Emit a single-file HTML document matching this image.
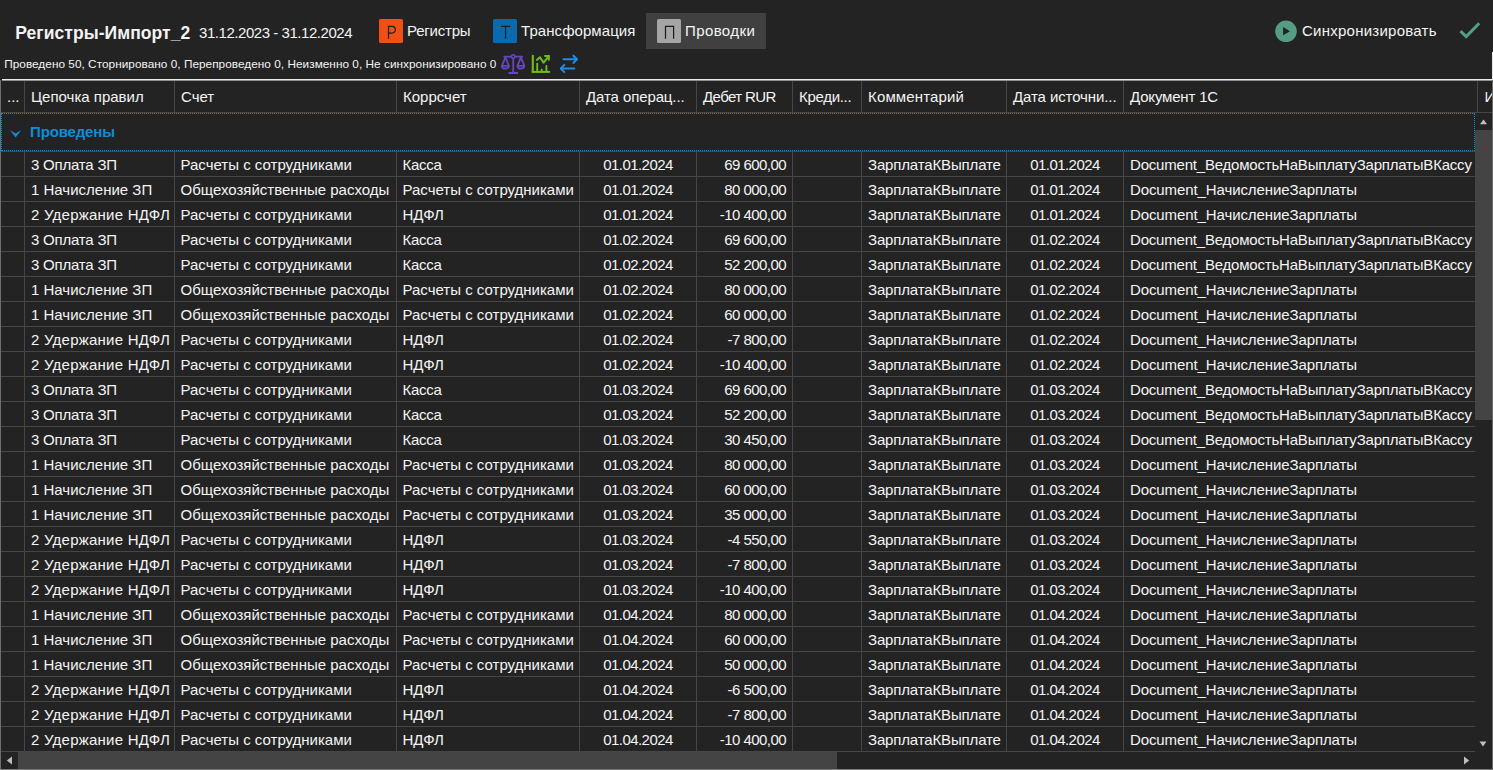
<!DOCTYPE html><html><head><meta charset="utf-8"><style>
*{margin:0;padding:0;box-sizing:border-box}
html,body{width:1493px;height:770px;overflow:hidden;background:#232323}
body{position:relative;font-family:"Liberation Sans",sans-serif;color:#F4F4F4;font-size:15px}
.a{position:absolute;white-space:nowrap}
.vl{position:absolute;width:1px;background:#464646}
.hl{position:absolute;height:1px;background:#464646}
.t{position:absolute;white-space:nowrap;line-height:18px;height:18px}
.num{letter-spacing:-0.55px}
.hd{letter-spacing:0}
</style></head><body>
<div class="a" style="left:15.3px;top:23px;font-size:17.5px;letter-spacing:0.05px;font-weight:bold;line-height:20px">Регистры-Импорт_2</div>
<div class="a" style="left:199px;top:24px;font-size:15px;line-height:18px;letter-spacing:-0.45px">31.12.2023 - 31.12.2024</div>
<div class="a" style="left:646px;top:13px;width:120px;height:36px;background:#404040"></div>
<svg class="a" style="left:379px;top:19px" width="24" height="24" viewBox="0 0 24 24"><rect x="0" y="0" width="24" height="24" rx="1.6" fill="#F24F17"/><path d="M9.5 19.8 V7.45 H13 A3.35 3.35 0 0 1 13 14.15 H9.5" fill="none" stroke="#1C1C1C" stroke-width="1.2"/></svg>
<div class="a" style="left:407px;top:22px;line-height:18px;letter-spacing:-0.2px">Регистры</div>
<svg class="a" style="left:493px;top:19px" width="24" height="24" viewBox="0 0 24 24"><rect x="0" y="0" width="24" height="24" rx="1.6" fill="#0A6AB0"/><path d="M8 7.45 H17.1 M12.55 7.45 V19.8" fill="none" stroke="#1C1C1C" stroke-width="1.2"/></svg>
<div class="a" style="left:521px;top:22px;line-height:18px;letter-spacing:0.07px">Трансформация</div>
<svg class="a" style="left:657px;top:19px" width="24" height="24" viewBox="0 0 24 24"><rect x="0" y="0" width="24" height="24" rx="1.6" fill="#A5A5A5"/><path d="M8.5 19.8 V7.45 H16.6 V19.8" fill="none" stroke="#1C1C1C" stroke-width="1.2"/></svg>
<div class="a" style="left:685px;top:22px;line-height:18px;letter-spacing:0.4px">Проводки</div>
<svg class="a" style="left:1274px;top:20px" width="24" height="23" viewBox="0 0 24 23"><circle cx="12" cy="11.3" r="10.8" fill="#559C84"/><path d="M9.1 6.9 L16 11.2 L9.1 15.3 Z" fill="#232323"/></svg>
<div class="a" style="left:1302px;top:22px;line-height:18px;letter-spacing:0.25px">Синхронизировать</div>
<svg class="a" style="left:1456px;top:19px" width="28" height="22" viewBox="0 0 28 22"><path d="M4.5 12.2 L10.2 17.6 L23.2 4.2" fill="none" stroke="#4FA086" stroke-width="3"/></svg>
<div class="a" style="left:4.2px;top:57px;font-size:11.8px;line-height:14px;letter-spacing:0.03px">Проведено 50, Сторнировано 0, Перепроведено 0, Неизменно 0, Не синхронизировано 0</div>
<svg class="a" style="left:499px;top:52px" width="28" height="24" viewBox="0 0 28 24"><g fill="none" stroke="#6744C0" stroke-width="1.8" stroke-linecap="round" stroke-linejoin="round"><path d="M5.3 4.7 H23.1"/><path d="M14.2 6 V20.5"/><path d="M9.4 21 H19" stroke-width="2" stroke-linecap="butt"/><path d="M6.4 5.3 L2.9 13.9 M6.4 5.3 L9.9 13.9 M2.9 13.9 H9.9 M2.9 13.9 A3.5 2.7 0 0 0 9.9 13.9"/><path d="M21.9 5.3 L18.4 13.9 M21.9 5.3 L25.4 13.9 M18.4 13.9 H25.4 M18.4 13.9 A3.5 2.7 0 0 0 25.4 13.9"/></g><circle cx="14.2" cy="4.5" r="1.7" fill="#232323" stroke="#6744C0" stroke-width="1.6"/></svg>
<svg class="a" style="left:528px;top:52px" width="28" height="24" viewBox="0 0 28 24"><g fill="none" stroke="#6DBD1C" stroke-width="2"><path d="M4.8 3.7 V19.9" stroke-width="2.1" stroke-linecap="round"/><path d="M3.75 19.9 H22.1"/><path d="M9.2 11.8 V19.9 M13.7 17.4 V19.9 M18.4 13.9 V19.9" stroke-width="1.9" stroke-linecap="round"/><path d="M8.9 7.9 L11.9 5.2 L15.6 10.6 L20.6 4.4" stroke-linejoin="round" stroke-linecap="round"/><path d="M17 4 H20.8 V7.8" stroke-linecap="round"/></g></svg>
<svg class="a" style="left:555px;top:52px" width="28" height="24" viewBox="0 0 28 24"><g fill="none" stroke="#218AE3" stroke-width="2.1" stroke-linecap="round" stroke-linejoin="round"><path d="M8.5 7.3 H21.7"/><path d="M18.5 3.7 L21.9 7.3 L18.5 10.9"/><path d="M19.3 16.5 H6.1"/><path d="M9.3 12.9 L6 16.5 L9.3 20.1"/></g></svg>
<div class="a" style="left:1492px;top:52px;width:1px;height:28px;background:#E6E6E6"></div>
<div class="a" style="left:2px;top:79px;width:1491px;height:1px;background:#EAEAEA"></div><div class="a" style="left:2px;top:80px;width:1491px;height:1px;background:#909090"></div>
<div class="a" style="left:0;top:80px;width:1px;height:690px;background:#6E6E6E"></div>
<div class="a" style="left:1492px;top:80px;width:1px;height:690px;background:#6A6A6A"></div>
<div class="a" style="left:0;top:769px;width:1493px;height:1px;background:#7A7A7A"></div>
<div class="t" style="left:7px;top:88px;letter-spacing:0px">...</div>
<div class="t" style="left:31px;top:88px;letter-spacing:0px">Цепочка правил</div>
<div class="t" style="left:181px;top:88px;letter-spacing:0px">Счет</div>
<div class="t" style="left:403px;top:88px;letter-spacing:0px">Коррсчет</div>
<div class="t" style="left:586px;top:88px;letter-spacing:-0.1px">Дата операц...</div>
<div class="t" style="left:703px;top:88px;letter-spacing:-0.6px">Дебет RUR</div>
<div class="t" style="left:799px;top:88px;letter-spacing:-0.3px">Креди...</div>
<div class="t" style="left:868px;top:88px;letter-spacing:0.15px">Комментарий</div>
<div class="t" style="left:1013px;top:88px;letter-spacing:-0.1px">Дата источни...</div>
<div class="t" style="left:1130px;top:88px;letter-spacing:-0.17px">Документ 1С</div>
<div class="a" style="left:1478px;top:82px;width:14px;height:30px;overflow:hidden"><div class="t" style="left:6.5px;top:6px">И</div></div>
<div class="vl" style="left:24px;top:81px;height:31px"></div>
<div class="vl" style="left:174px;top:81px;height:31px"></div>
<div class="vl" style="left:396px;top:81px;height:31px"></div>
<div class="vl" style="left:579px;top:81px;height:31px"></div>
<div class="vl" style="left:696px;top:81px;height:31px"></div>
<div class="vl" style="left:792px;top:81px;height:31px"></div>
<div class="vl" style="left:861px;top:81px;height:31px"></div>
<div class="vl" style="left:1006px;top:81px;height:31px"></div>
<div class="vl" style="left:1123px;top:81px;height:31px"></div>
<div class="vl" style="left:1477px;top:81px;height:31px"></div>
<div class="hl" style="left:1px;top:112px;width:1491px"></div>
<div class="a" style="left:1px;top:113px;width:1474px;height:38px;border:1px dotted #0A8ED8"></div>
<svg class="a" style="left:9px;top:129px" width="14" height="10" viewBox="0 0 14 10"><path d="M1 1 L6.6 4.4 L12.3 1 L6.6 8.4 Z" fill="#0A8ED8"/></svg>
<div class="a" style="left:30px;top:123px;font-weight:bold;color:#0A8ED8;line-height:18px;letter-spacing:-0.15px">Проведены</div>
<div class="hl" style="left:1px;top:151px;width:1474px"></div>
<div class="t" style="left:31px;top:156px;letter-spacing:-0.2px">3 Оплата ЗП</div>
<div class="t" style="left:180.5px;top:156px;letter-spacing:0px">Расчеты с сотрудниками</div>
<div class="t" style="left:402.5px;top:156px;letter-spacing:-0.3px">Касса</div>
<div class="t num" style="left:580px;width:116px;text-align:center;top:156px">01.01.2024</div>
<div class="t num" style="left:697px;width:89px;text-align:right;top:156px">69 600,00</div>
<div class="t" style="left:868px;top:156px;letter-spacing:-0.15px">ЗарплатаКВыплате</div>
<div class="t num" style="left:1007px;width:116px;text-align:center;top:156px">01.01.2024</div>
<div class="t" style="left:1130px;top:156px;letter-spacing:-0.2px">Document_ВедомостьНаВыплатуЗарплатыВКассу</div>
<div class="hl" style="left:1px;top:176px;width:1474px"></div>
<div class="t" style="left:31px;top:181px;letter-spacing:0px">1 Начисление ЗП</div>
<div class="t" style="left:180.5px;top:181px;letter-spacing:0px">Общехозяйственные расходы</div>
<div class="t" style="left:402.5px;top:181px;letter-spacing:0px">Расчеты с сотрудниками</div>
<div class="t num" style="left:580px;width:116px;text-align:center;top:181px">01.01.2024</div>
<div class="t num" style="left:697px;width:89px;text-align:right;top:181px">80 000,00</div>
<div class="t" style="left:868px;top:181px;letter-spacing:-0.15px">ЗарплатаКВыплате</div>
<div class="t num" style="left:1007px;width:116px;text-align:center;top:181px">01.01.2024</div>
<div class="t" style="left:1130px;top:181px;letter-spacing:-0.1px">Document_НачислениеЗарплаты</div>
<div class="hl" style="left:1px;top:201px;width:1474px"></div>
<div class="t" style="left:31px;top:206px;letter-spacing:0.24px">2 Удержание НДФЛ</div>
<div class="t" style="left:180.5px;top:206px;letter-spacing:0px">Расчеты с сотрудниками</div>
<div class="t" style="left:402.5px;top:206px;letter-spacing:0px">НДФЛ</div>
<div class="t num" style="left:580px;width:116px;text-align:center;top:206px">01.01.2024</div>
<div class="t num" style="left:697px;width:89px;text-align:right;top:206px">-10 400,00</div>
<div class="t" style="left:868px;top:206px;letter-spacing:-0.15px">ЗарплатаКВыплате</div>
<div class="t num" style="left:1007px;width:116px;text-align:center;top:206px">01.01.2024</div>
<div class="t" style="left:1130px;top:206px;letter-spacing:-0.1px">Document_НачислениеЗарплаты</div>
<div class="hl" style="left:1px;top:226px;width:1474px"></div>
<div class="t" style="left:31px;top:231px;letter-spacing:-0.2px">3 Оплата ЗП</div>
<div class="t" style="left:180.5px;top:231px;letter-spacing:0px">Расчеты с сотрудниками</div>
<div class="t" style="left:402.5px;top:231px;letter-spacing:-0.3px">Касса</div>
<div class="t num" style="left:580px;width:116px;text-align:center;top:231px">01.02.2024</div>
<div class="t num" style="left:697px;width:89px;text-align:right;top:231px">69 600,00</div>
<div class="t" style="left:868px;top:231px;letter-spacing:-0.15px">ЗарплатаКВыплате</div>
<div class="t num" style="left:1007px;width:116px;text-align:center;top:231px">01.02.2024</div>
<div class="t" style="left:1130px;top:231px;letter-spacing:-0.2px">Document_ВедомостьНаВыплатуЗарплатыВКассу</div>
<div class="hl" style="left:1px;top:251px;width:1474px"></div>
<div class="t" style="left:31px;top:256px;letter-spacing:-0.2px">3 Оплата ЗП</div>
<div class="t" style="left:180.5px;top:256px;letter-spacing:0px">Расчеты с сотрудниками</div>
<div class="t" style="left:402.5px;top:256px;letter-spacing:-0.3px">Касса</div>
<div class="t num" style="left:580px;width:116px;text-align:center;top:256px">01.02.2024</div>
<div class="t num" style="left:697px;width:89px;text-align:right;top:256px">52 200,00</div>
<div class="t" style="left:868px;top:256px;letter-spacing:-0.15px">ЗарплатаКВыплате</div>
<div class="t num" style="left:1007px;width:116px;text-align:center;top:256px">01.02.2024</div>
<div class="t" style="left:1130px;top:256px;letter-spacing:-0.2px">Document_ВедомостьНаВыплатуЗарплатыВКассу</div>
<div class="hl" style="left:1px;top:276px;width:1474px"></div>
<div class="t" style="left:31px;top:281px;letter-spacing:0px">1 Начисление ЗП</div>
<div class="t" style="left:180.5px;top:281px;letter-spacing:0px">Общехозяйственные расходы</div>
<div class="t" style="left:402.5px;top:281px;letter-spacing:0px">Расчеты с сотрудниками</div>
<div class="t num" style="left:580px;width:116px;text-align:center;top:281px">01.02.2024</div>
<div class="t num" style="left:697px;width:89px;text-align:right;top:281px">80 000,00</div>
<div class="t" style="left:868px;top:281px;letter-spacing:-0.15px">ЗарплатаКВыплате</div>
<div class="t num" style="left:1007px;width:116px;text-align:center;top:281px">01.02.2024</div>
<div class="t" style="left:1130px;top:281px;letter-spacing:-0.1px">Document_НачислениеЗарплаты</div>
<div class="hl" style="left:1px;top:301px;width:1474px"></div>
<div class="t" style="left:31px;top:306px;letter-spacing:0px">1 Начисление ЗП</div>
<div class="t" style="left:180.5px;top:306px;letter-spacing:0px">Общехозяйственные расходы</div>
<div class="t" style="left:402.5px;top:306px;letter-spacing:0px">Расчеты с сотрудниками</div>
<div class="t num" style="left:580px;width:116px;text-align:center;top:306px">01.02.2024</div>
<div class="t num" style="left:697px;width:89px;text-align:right;top:306px">60 000,00</div>
<div class="t" style="left:868px;top:306px;letter-spacing:-0.15px">ЗарплатаКВыплате</div>
<div class="t num" style="left:1007px;width:116px;text-align:center;top:306px">01.02.2024</div>
<div class="t" style="left:1130px;top:306px;letter-spacing:-0.1px">Document_НачислениеЗарплаты</div>
<div class="hl" style="left:1px;top:326px;width:1474px"></div>
<div class="t" style="left:31px;top:331px;letter-spacing:0.24px">2 Удержание НДФЛ</div>
<div class="t" style="left:180.5px;top:331px;letter-spacing:0px">Расчеты с сотрудниками</div>
<div class="t" style="left:402.5px;top:331px;letter-spacing:0px">НДФЛ</div>
<div class="t num" style="left:580px;width:116px;text-align:center;top:331px">01.02.2024</div>
<div class="t num" style="left:697px;width:89px;text-align:right;top:331px">-7 800,00</div>
<div class="t" style="left:868px;top:331px;letter-spacing:-0.15px">ЗарплатаКВыплате</div>
<div class="t num" style="left:1007px;width:116px;text-align:center;top:331px">01.02.2024</div>
<div class="t" style="left:1130px;top:331px;letter-spacing:-0.1px">Document_НачислениеЗарплаты</div>
<div class="hl" style="left:1px;top:351px;width:1474px"></div>
<div class="t" style="left:31px;top:356px;letter-spacing:0.24px">2 Удержание НДФЛ</div>
<div class="t" style="left:180.5px;top:356px;letter-spacing:0px">Расчеты с сотрудниками</div>
<div class="t" style="left:402.5px;top:356px;letter-spacing:0px">НДФЛ</div>
<div class="t num" style="left:580px;width:116px;text-align:center;top:356px">01.02.2024</div>
<div class="t num" style="left:697px;width:89px;text-align:right;top:356px">-10 400,00</div>
<div class="t" style="left:868px;top:356px;letter-spacing:-0.15px">ЗарплатаКВыплате</div>
<div class="t num" style="left:1007px;width:116px;text-align:center;top:356px">01.02.2024</div>
<div class="t" style="left:1130px;top:356px;letter-spacing:-0.1px">Document_НачислениеЗарплаты</div>
<div class="hl" style="left:1px;top:376px;width:1474px"></div>
<div class="t" style="left:31px;top:381px;letter-spacing:-0.2px">3 Оплата ЗП</div>
<div class="t" style="left:180.5px;top:381px;letter-spacing:0px">Расчеты с сотрудниками</div>
<div class="t" style="left:402.5px;top:381px;letter-spacing:-0.3px">Касса</div>
<div class="t num" style="left:580px;width:116px;text-align:center;top:381px">01.03.2024</div>
<div class="t num" style="left:697px;width:89px;text-align:right;top:381px">69 600,00</div>
<div class="t" style="left:868px;top:381px;letter-spacing:-0.15px">ЗарплатаКВыплате</div>
<div class="t num" style="left:1007px;width:116px;text-align:center;top:381px">01.03.2024</div>
<div class="t" style="left:1130px;top:381px;letter-spacing:-0.2px">Document_ВедомостьНаВыплатуЗарплатыВКассу</div>
<div class="hl" style="left:1px;top:401px;width:1474px"></div>
<div class="t" style="left:31px;top:406px;letter-spacing:-0.2px">3 Оплата ЗП</div>
<div class="t" style="left:180.5px;top:406px;letter-spacing:0px">Расчеты с сотрудниками</div>
<div class="t" style="left:402.5px;top:406px;letter-spacing:-0.3px">Касса</div>
<div class="t num" style="left:580px;width:116px;text-align:center;top:406px">01.03.2024</div>
<div class="t num" style="left:697px;width:89px;text-align:right;top:406px">52 200,00</div>
<div class="t" style="left:868px;top:406px;letter-spacing:-0.15px">ЗарплатаКВыплате</div>
<div class="t num" style="left:1007px;width:116px;text-align:center;top:406px">01.03.2024</div>
<div class="t" style="left:1130px;top:406px;letter-spacing:-0.2px">Document_ВедомостьНаВыплатуЗарплатыВКассу</div>
<div class="hl" style="left:1px;top:426px;width:1474px"></div>
<div class="t" style="left:31px;top:431px;letter-spacing:-0.2px">3 Оплата ЗП</div>
<div class="t" style="left:180.5px;top:431px;letter-spacing:0px">Расчеты с сотрудниками</div>
<div class="t" style="left:402.5px;top:431px;letter-spacing:-0.3px">Касса</div>
<div class="t num" style="left:580px;width:116px;text-align:center;top:431px">01.03.2024</div>
<div class="t num" style="left:697px;width:89px;text-align:right;top:431px">30 450,00</div>
<div class="t" style="left:868px;top:431px;letter-spacing:-0.15px">ЗарплатаКВыплате</div>
<div class="t num" style="left:1007px;width:116px;text-align:center;top:431px">01.03.2024</div>
<div class="t" style="left:1130px;top:431px;letter-spacing:-0.2px">Document_ВедомостьНаВыплатуЗарплатыВКассу</div>
<div class="hl" style="left:1px;top:451px;width:1474px"></div>
<div class="t" style="left:31px;top:456px;letter-spacing:0px">1 Начисление ЗП</div>
<div class="t" style="left:180.5px;top:456px;letter-spacing:0px">Общехозяйственные расходы</div>
<div class="t" style="left:402.5px;top:456px;letter-spacing:0px">Расчеты с сотрудниками</div>
<div class="t num" style="left:580px;width:116px;text-align:center;top:456px">01.03.2024</div>
<div class="t num" style="left:697px;width:89px;text-align:right;top:456px">80 000,00</div>
<div class="t" style="left:868px;top:456px;letter-spacing:-0.15px">ЗарплатаКВыплате</div>
<div class="t num" style="left:1007px;width:116px;text-align:center;top:456px">01.03.2024</div>
<div class="t" style="left:1130px;top:456px;letter-spacing:-0.1px">Document_НачислениеЗарплаты</div>
<div class="hl" style="left:1px;top:476px;width:1474px"></div>
<div class="t" style="left:31px;top:481px;letter-spacing:0px">1 Начисление ЗП</div>
<div class="t" style="left:180.5px;top:481px;letter-spacing:0px">Общехозяйственные расходы</div>
<div class="t" style="left:402.5px;top:481px;letter-spacing:0px">Расчеты с сотрудниками</div>
<div class="t num" style="left:580px;width:116px;text-align:center;top:481px">01.03.2024</div>
<div class="t num" style="left:697px;width:89px;text-align:right;top:481px">60 000,00</div>
<div class="t" style="left:868px;top:481px;letter-spacing:-0.15px">ЗарплатаКВыплате</div>
<div class="t num" style="left:1007px;width:116px;text-align:center;top:481px">01.03.2024</div>
<div class="t" style="left:1130px;top:481px;letter-spacing:-0.1px">Document_НачислениеЗарплаты</div>
<div class="hl" style="left:1px;top:501px;width:1474px"></div>
<div class="t" style="left:31px;top:506px;letter-spacing:0px">1 Начисление ЗП</div>
<div class="t" style="left:180.5px;top:506px;letter-spacing:0px">Общехозяйственные расходы</div>
<div class="t" style="left:402.5px;top:506px;letter-spacing:0px">Расчеты с сотрудниками</div>
<div class="t num" style="left:580px;width:116px;text-align:center;top:506px">01.03.2024</div>
<div class="t num" style="left:697px;width:89px;text-align:right;top:506px">35 000,00</div>
<div class="t" style="left:868px;top:506px;letter-spacing:-0.15px">ЗарплатаКВыплате</div>
<div class="t num" style="left:1007px;width:116px;text-align:center;top:506px">01.03.2024</div>
<div class="t" style="left:1130px;top:506px;letter-spacing:-0.1px">Document_НачислениеЗарплаты</div>
<div class="hl" style="left:1px;top:526px;width:1474px"></div>
<div class="t" style="left:31px;top:531px;letter-spacing:0.24px">2 Удержание НДФЛ</div>
<div class="t" style="left:180.5px;top:531px;letter-spacing:0px">Расчеты с сотрудниками</div>
<div class="t" style="left:402.5px;top:531px;letter-spacing:0px">НДФЛ</div>
<div class="t num" style="left:580px;width:116px;text-align:center;top:531px">01.03.2024</div>
<div class="t num" style="left:697px;width:89px;text-align:right;top:531px">-4 550,00</div>
<div class="t" style="left:868px;top:531px;letter-spacing:-0.15px">ЗарплатаКВыплате</div>
<div class="t num" style="left:1007px;width:116px;text-align:center;top:531px">01.03.2024</div>
<div class="t" style="left:1130px;top:531px;letter-spacing:-0.1px">Document_НачислениеЗарплаты</div>
<div class="hl" style="left:1px;top:551px;width:1474px"></div>
<div class="t" style="left:31px;top:556px;letter-spacing:0.24px">2 Удержание НДФЛ</div>
<div class="t" style="left:180.5px;top:556px;letter-spacing:0px">Расчеты с сотрудниками</div>
<div class="t" style="left:402.5px;top:556px;letter-spacing:0px">НДФЛ</div>
<div class="t num" style="left:580px;width:116px;text-align:center;top:556px">01.03.2024</div>
<div class="t num" style="left:697px;width:89px;text-align:right;top:556px">-7 800,00</div>
<div class="t" style="left:868px;top:556px;letter-spacing:-0.15px">ЗарплатаКВыплате</div>
<div class="t num" style="left:1007px;width:116px;text-align:center;top:556px">01.03.2024</div>
<div class="t" style="left:1130px;top:556px;letter-spacing:-0.1px">Document_НачислениеЗарплаты</div>
<div class="hl" style="left:1px;top:576px;width:1474px"></div>
<div class="t" style="left:31px;top:581px;letter-spacing:0.24px">2 Удержание НДФЛ</div>
<div class="t" style="left:180.5px;top:581px;letter-spacing:0px">Расчеты с сотрудниками</div>
<div class="t" style="left:402.5px;top:581px;letter-spacing:0px">НДФЛ</div>
<div class="t num" style="left:580px;width:116px;text-align:center;top:581px">01.03.2024</div>
<div class="t num" style="left:697px;width:89px;text-align:right;top:581px">-10 400,00</div>
<div class="t" style="left:868px;top:581px;letter-spacing:-0.15px">ЗарплатаКВыплате</div>
<div class="t num" style="left:1007px;width:116px;text-align:center;top:581px">01.03.2024</div>
<div class="t" style="left:1130px;top:581px;letter-spacing:-0.1px">Document_НачислениеЗарплаты</div>
<div class="hl" style="left:1px;top:601px;width:1474px"></div>
<div class="t" style="left:31px;top:606px;letter-spacing:0px">1 Начисление ЗП</div>
<div class="t" style="left:180.5px;top:606px;letter-spacing:0px">Общехозяйственные расходы</div>
<div class="t" style="left:402.5px;top:606px;letter-spacing:0px">Расчеты с сотрудниками</div>
<div class="t num" style="left:580px;width:116px;text-align:center;top:606px">01.04.2024</div>
<div class="t num" style="left:697px;width:89px;text-align:right;top:606px">80 000,00</div>
<div class="t" style="left:868px;top:606px;letter-spacing:-0.15px">ЗарплатаКВыплате</div>
<div class="t num" style="left:1007px;width:116px;text-align:center;top:606px">01.04.2024</div>
<div class="t" style="left:1130px;top:606px;letter-spacing:-0.1px">Document_НачислениеЗарплаты</div>
<div class="hl" style="left:1px;top:626px;width:1474px"></div>
<div class="t" style="left:31px;top:631px;letter-spacing:0px">1 Начисление ЗП</div>
<div class="t" style="left:180.5px;top:631px;letter-spacing:0px">Общехозяйственные расходы</div>
<div class="t" style="left:402.5px;top:631px;letter-spacing:0px">Расчеты с сотрудниками</div>
<div class="t num" style="left:580px;width:116px;text-align:center;top:631px">01.04.2024</div>
<div class="t num" style="left:697px;width:89px;text-align:right;top:631px">60 000,00</div>
<div class="t" style="left:868px;top:631px;letter-spacing:-0.15px">ЗарплатаКВыплате</div>
<div class="t num" style="left:1007px;width:116px;text-align:center;top:631px">01.04.2024</div>
<div class="t" style="left:1130px;top:631px;letter-spacing:-0.1px">Document_НачислениеЗарплаты</div>
<div class="hl" style="left:1px;top:651px;width:1474px"></div>
<div class="t" style="left:31px;top:656px;letter-spacing:0px">1 Начисление ЗП</div>
<div class="t" style="left:180.5px;top:656px;letter-spacing:0px">Общехозяйственные расходы</div>
<div class="t" style="left:402.5px;top:656px;letter-spacing:0px">Расчеты с сотрудниками</div>
<div class="t num" style="left:580px;width:116px;text-align:center;top:656px">01.04.2024</div>
<div class="t num" style="left:697px;width:89px;text-align:right;top:656px">50 000,00</div>
<div class="t" style="left:868px;top:656px;letter-spacing:-0.15px">ЗарплатаКВыплате</div>
<div class="t num" style="left:1007px;width:116px;text-align:center;top:656px">01.04.2024</div>
<div class="t" style="left:1130px;top:656px;letter-spacing:-0.1px">Document_НачислениеЗарплаты</div>
<div class="hl" style="left:1px;top:676px;width:1474px"></div>
<div class="t" style="left:31px;top:681px;letter-spacing:0.24px">2 Удержание НДФЛ</div>
<div class="t" style="left:180.5px;top:681px;letter-spacing:0px">Расчеты с сотрудниками</div>
<div class="t" style="left:402.5px;top:681px;letter-spacing:0px">НДФЛ</div>
<div class="t num" style="left:580px;width:116px;text-align:center;top:681px">01.04.2024</div>
<div class="t num" style="left:697px;width:89px;text-align:right;top:681px">-6 500,00</div>
<div class="t" style="left:868px;top:681px;letter-spacing:-0.15px">ЗарплатаКВыплате</div>
<div class="t num" style="left:1007px;width:116px;text-align:center;top:681px">01.04.2024</div>
<div class="t" style="left:1130px;top:681px;letter-spacing:-0.1px">Document_НачислениеЗарплаты</div>
<div class="hl" style="left:1px;top:701px;width:1474px"></div>
<div class="t" style="left:31px;top:706px;letter-spacing:0.24px">2 Удержание НДФЛ</div>
<div class="t" style="left:180.5px;top:706px;letter-spacing:0px">Расчеты с сотрудниками</div>
<div class="t" style="left:402.5px;top:706px;letter-spacing:0px">НДФЛ</div>
<div class="t num" style="left:580px;width:116px;text-align:center;top:706px">01.04.2024</div>
<div class="t num" style="left:697px;width:89px;text-align:right;top:706px">-7 800,00</div>
<div class="t" style="left:868px;top:706px;letter-spacing:-0.15px">ЗарплатаКВыплате</div>
<div class="t num" style="left:1007px;width:116px;text-align:center;top:706px">01.04.2024</div>
<div class="t" style="left:1130px;top:706px;letter-spacing:-0.1px">Document_НачислениеЗарплаты</div>
<div class="hl" style="left:1px;top:726px;width:1474px"></div>
<div class="t" style="left:31px;top:731px;letter-spacing:0.24px">2 Удержание НДФЛ</div>
<div class="t" style="left:180.5px;top:731px;letter-spacing:0px">Расчеты с сотрудниками</div>
<div class="t" style="left:402.5px;top:731px;letter-spacing:0px">НДФЛ</div>
<div class="t num" style="left:580px;width:116px;text-align:center;top:731px">01.04.2024</div>
<div class="t num" style="left:697px;width:89px;text-align:right;top:731px">-10 400,00</div>
<div class="t" style="left:868px;top:731px;letter-spacing:-0.15px">ЗарплатаКВыплате</div>
<div class="t num" style="left:1007px;width:116px;text-align:center;top:731px">01.04.2024</div>
<div class="t" style="left:1130px;top:731px;letter-spacing:-0.1px">Document_НачислениеЗарплаты</div>
<div class="hl" style="left:1px;top:751px;width:1474px"></div>
<div class="vl" style="left:24px;top:152px;height:600px"></div>
<div class="vl" style="left:174px;top:152px;height:600px"></div>
<div class="vl" style="left:396px;top:152px;height:600px"></div>
<div class="vl" style="left:579px;top:152px;height:600px"></div>
<div class="vl" style="left:696px;top:152px;height:600px"></div>
<div class="vl" style="left:792px;top:152px;height:600px"></div>
<div class="vl" style="left:861px;top:152px;height:600px"></div>
<div class="vl" style="left:1006px;top:152px;height:600px"></div>
<div class="vl" style="left:1123px;top:152px;height:600px"></div>
<div class="a" style="left:1475px;top:113px;width:17px;height:639px;background:#232323"></div>
<div class="a" style="left:1475px;top:130px;width:17px;height:290px;background:#444444"></div>
<svg class="a" style="left:1478px;top:118px" width="10" height="8" viewBox="0 0 10 8"><path d="M2 6.2 L5.5 1.4 L9 6.2 Z" fill="#BDBDBD"/></svg>
<svg class="a" style="left:1478px;top:740px" width="10" height="8" viewBox="0 0 10 8"><path d="M1.5 1.5 L8.5 1.5 L5 6.5 Z" fill="#BDBDBD"/></svg>
<div class="a" style="left:1px;top:752px;width:1491px;height:17px;background:#232323"></div>
<div class="a" style="left:18px;top:752px;width:819px;height:17px;background:#444444"></div>
<svg class="a" style="left:5px;top:755px" width="9" height="11" viewBox="0 0 9 11"><path d="M7 1.5 L7 9.5 L1.8 5.5 Z" fill="#BDBDBD"/></svg>
<svg class="a" style="left:1462px;top:755px" width="9" height="11" viewBox="0 0 9 11"><path d="M2 1.5 L2 9.5 L7.2 5.5 Z" fill="#BDBDBD"/></svg>
</body></html>
